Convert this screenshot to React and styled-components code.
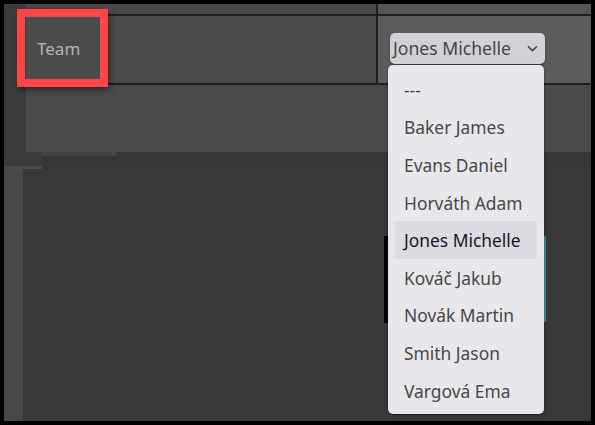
import React from "react";
import styled, { createGlobalStyle } from "styled-components";

const Global = createGlobalStyle`
  html, body { margin: 0; padding: 0; background: #000; }
  body { font-family: "Noto Sans", "Segoe UI", sans-serif; }
  * { box-sizing: border-box; }
`;

const Frame = styled.div`
  position: relative;
  width: 595px;
  height: 425px;
  padding: 4px;
  background: #000;
  overflow: hidden;
`;

const Screen = styled.div`
  display: flex;
  flex-direction: column;
  width: 100%;
  height: 100%;
  background: #393939;
`;

const Top = styled.div`
  display: grid;
  grid-template-columns: 22px 1fr;
  height: 148px;
`;

const SideStrip = styled.div`
  background: ${(p) => p.$bg || "#3b3b3b"};
`;

const Header = styled.div`
  display: grid;
  grid-template-columns: 350px 2px 1fr;
  grid-template-rows: 10px 2px 67px 2px 1fr;
  background: #4b4b4b;
`;

const Cell = styled.div`
  background: ${(p) => p.$bg};
  grid-column: ${(p) => p.$col || "auto"};
  grid-row: ${(p) => p.$row || "auto"};
  display: flex;
  align-items: center;
`;

const Line = styled.div`
  background: #1f1f1f;
  grid-column: ${(p) => p.$col || "auto"};
  grid-row: ${(p) => p.$row || "auto"};
`;

const Label = styled.span`
  font-size: 17px;
  color: #b4b4b4;
  padding-left: 11px;
  margin-top: -3px;
`;

const Band = styled.div`
  display: grid;
  grid-template-columns: 22px 16px 74px 1fr;
  grid-template-rows: 4px 10px 3px;
  height: 17px;
  background: #373737;
`;

const BandPiece = styled.div`
  background: ${(p) => p.$bg};
  grid-column: ${(p) => p.$col};
  grid-row: ${(p) => p.$row};
`;

const Bottom = styled.div`
  flex: 1;
  display: grid;
  grid-template-columns: 19px 361px 4px 156px 2px 1fr;
`;

const Panel = styled.div`
  background: ${(p) => p.$bg || "#383838"};
  display: flex;
  flex-direction: column;
`;

const Gap = styled.div`
  height: ${(p) => p.$h}px;
  background: ${(p) => p.$bg || "transparent"};
`;

const Highlight = styled.div`
  position: absolute;
  left: 17px;
  top: 9px;
  width: 91px;
  height: 78px;
  border: 8px solid #fe4545;
  box-shadow: 2px 3px 6px rgba(0, 0, 0, 0.45);
`;

const SelectButton = styled.div`
  position: absolute;
  left: 390px;
  top: 33px;
  width: 155px;
  height: 31px;
  border-radius: 5px;
  background: #d2d1d7;
  display: flex;
  align-items: center;
  justify-content: space-between;
  padding: 0 7px 2px 3px;
  color: #454545;
  font-size: 17.6px;
  box-shadow: 0 1px 2px rgba(0, 0, 0, 0.4);
`;

const Chevron = styled.svg`
  width: 11px;
  height: 7px;
  margin-top: 2px;
`;

const Menu = styled.ul`
  position: absolute;
  left: 388px;
  top: 65px;
  width: 156px;
  margin: 0;
  padding: 6px 7px 5px;
  list-style: none;
  background: #e8e7ec;
  border-radius: 5px;
  box-shadow: 0 1px 3px rgba(0, 0, 0, 0.5);
`;

const Item = styled.li`
  height: 37.6px;
  display: flex;
  align-items: center;
  padding-left: 9px;
  border-radius: 4px;
  font-size: 17.4px;
  color: ${(p) => (p.$active ? "#161625" : "#4a4745")};
  background: ${(p) => (p.$active ? "#dcdbe2" : "transparent")};
  white-space: nowrap;
`;

const people = [
  "---",
  "Baker James",
  "Evans Daniel",
  "Horváth Adam",
  "Jones Michelle",
  "Kováč Jakub",
  "Novák Martin",
  "Smith Jason",
  "Vargová Ema",
];

export default function App() {
  return (
    <>
      <Global />
      <Frame>
        <Screen>
          <Top>
            <SideStrip />
            <Header>
              <Cell $bg="#494949" $col="1 / 2" $row="1 / 2" />
              <Line $col="2 / 3" $row="1 / 4" />
              <Cell $bg="#555555" $col="3 / 4" $row="1 / 2" />
              <Line $col="1 / 2" $row="2 / 3" />
              <Line $col="3 / 4" $row="2 / 3" />
              <Cell $bg="#4b4b4b" $col="1 / 2" $row="3 / 4">
                <Label>Team</Label>
              </Cell>
              <Cell $bg="#5c5c5c" $col="3 / 4" $row="3 / 4" />
              <Line $col="1 / 4" $row="4 / 5" />
              <Cell $bg="#4a4a4a" $col="1 / 4" $row="5 / 6" />
            </Header>
          </Top>
          <Band>
            <BandPiece $bg="#3c3c3c" $col="1 / 3" $row="1 / 3" />
            <BandPiece $bg="#444444" $col="3 / 4" $row="1 / 2" />
            <BandPiece $bg="#4b4b4b" $col="1 / 3" $row="3 / 4" />
          </Band>
          <Bottom>
            <SideStrip $bg="#474747" />
            <Panel />
            <Panel>
              <Gap $h={67} />
              <Gap $h={87} $bg="#000" />
            </Panel>
            <Panel />
            <Panel>
              <Gap $h={67} />
              <Gap $h={86} $bg="#4b8aa6" />
            </Panel>
            <Panel />
          </Bottom>
        </Screen>
        <Highlight />
        <SelectButton>
          <span>Jones Michelle</span>
          <Chevron viewBox="0 0 11 7">
            <path d="M1 1.2 L5.5 5.6 L10 1.2" fill="none" stroke="#444" strokeWidth="1.5" />
          </Chevron>
        </SelectButton>
        <Menu>
          {people.map((p) => (
            <Item key={p} $active={p === "Jones Michelle"}>
              {p}
            </Item>
          ))}
        </Menu>
      </Frame>
    </>
  );
}
